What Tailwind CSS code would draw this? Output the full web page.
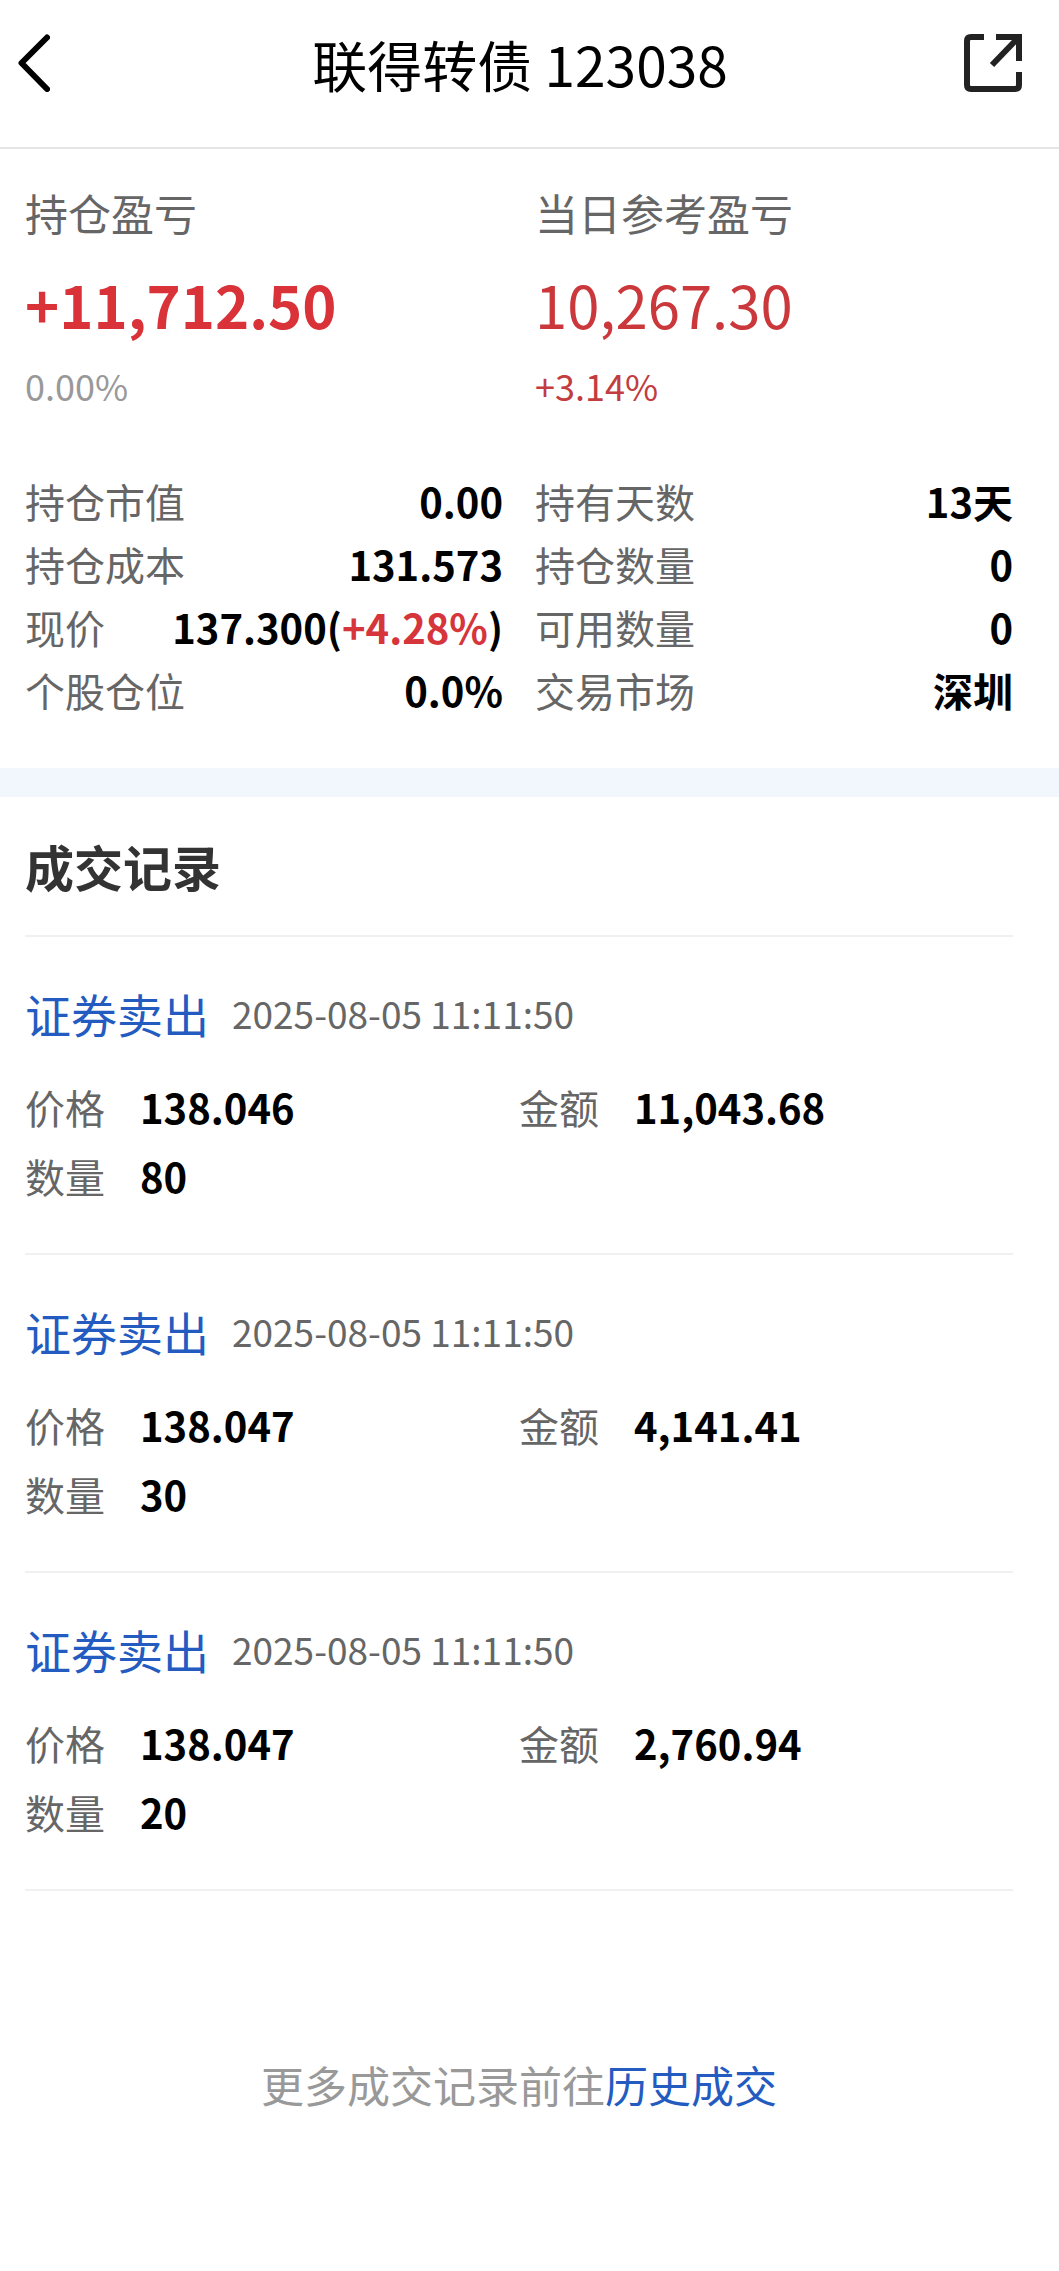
<!DOCTYPE html>
<html lang="zh-CN">
<head>
  <meta charset="UTF-8" />
  <meta name="viewport" content="width=device-width, initial-scale=1.0" />
  <title>联得转债 123038</title>
  <script src="https://cdn.jsdelivr.net/npm/@tailwindcss/browser@4"></script>
</head>
<body class="min-h-screen bg-white text-black font-['Noto_Sans_CJK_SC',sans-serif]">
  <header class="grid grid-cols-[1fr_auto_1fr] items-center h-[149px] pl-[18px] pr-[37px] pb-[22px] border-b-2 border-[#e5e5e5]">
    <button type="button" aria-label="返回" class="justify-self-start">
      <svg class="block w-[32px] h-[58px]" viewBox="0 0 32 58" fill="none" stroke="#000" stroke-width="6" stroke-linecap="round" stroke-linejoin="round">
        <path d="M29 3.5 L3.5 29 L29 55" />
      </svg>
    </button>
    <h1 class="text-[55px] leading-[80px]">联得转债 123038</h1>
    <button type="button" aria-label="分享" class="justify-self-end">
      <svg class="block size-[58px]" viewBox="0 0 58 58" fill="none" stroke="#222" stroke-width="6">
        <path d="M20 3 H7 Q3 3 3 7 V51 Q3 55 7 55 H51 Q55 55 55 51 V38" />
        <path d="M32 3 H55 V27" />
        <path d="M54 4 L28 31" />
      </svg>
    </button>
  </header>

  <main>
    <!-- Position summary -->
    <section class="pl-[25px] pr-[46px] pt-[31px] pb-[46px]">
      <div class="grid grid-cols-2 gap-x-8">
        <div>
          <h2 class="text-[43px] leading-[64px] text-[#666]">持仓盈亏</h2>
          <p class="mt-[20px] text-[58px] leading-[80px] font-bold text-[#d93238]">+11,712.50</p>
          <p class="mt-[17px] text-[36px] leading-[48px] text-[#999]">0.00%</p>
        </div>
        <div>
          <h2 class="text-[43px] leading-[64px] text-[#666]">当日参考盈亏</h2>
          <p class="mt-[20px] text-[58px] leading-[80px] text-[#cb383c]">10,267.30</p>
          <p class="mt-[17px] text-[36px] leading-[48px] text-[#c23c40]">+3.14%</p>
        </div>
      </div>

      <div class="grid grid-cols-2 gap-x-8 mt-[61px] text-[40px] leading-[63px]">
        <dl>
          <div class="flex justify-between">
            <dt class="text-[#666]">持仓市值</dt>
            <dd class="font-bold">0.00</dd>
          </div>
          <div class="flex justify-between">
            <dt class="text-[#666]">持仓成本</dt>
            <dd class="font-bold">131.573</dd>
          </div>
          <div class="flex justify-between">
            <dt class="text-[#666]">现价</dt>
            <dd class="font-bold">137.300(<span class="text-[#d5353b]">+4.28%</span>)</dd>
          </div>
          <div class="flex justify-between">
            <dt class="text-[#666]">个股仓位</dt>
            <dd class="font-bold">0.0%</dd>
          </div>
        </dl>
        <dl>
          <div class="flex justify-between">
            <dt class="text-[#666]">持有天数</dt>
            <dd class="font-bold">13天</dd>
          </div>
          <div class="flex justify-between">
            <dt class="text-[#666]">持仓数量</dt>
            <dd class="font-bold">0</dd>
          </div>
          <div class="flex justify-between">
            <dt class="text-[#666]">可用数量</dt>
            <dd class="font-bold">0</dd>
          </div>
          <div class="flex justify-between">
            <dt class="text-[#666]">交易市场</dt>
            <dd class="font-bold">深圳</dd>
          </div>
        </dl>
      </div>
    </section>

    <div class="h-[29px] bg-[#f2f6fd]"></div>

    <!-- Trade records -->
    <section class="pl-[25px] pr-[46px]">
      <h2 class="py-[33px] text-[49px] leading-[72px] font-bold text-[#333] border-b-2 border-[#f0f0f0]">成交记录</h2>

      <article class="pt-[44px] pb-[42px] border-b-2 border-[#f0f0f0]">
        <div class="flex items-center gap-[23px] leading-[64px]">
          <h3 class="text-[46px] text-[#245bc1]">证券卖出</h3>
          <time class="text-[37px] text-[#666]">2025-08-05 11:11:50</time>
        </div>
        <dl class="grid grid-cols-2 mt-[28px] text-[40px] leading-[69px]">
          <div class="flex gap-[35px]">
            <dt class="text-[#666]">价格</dt>
            <dd class="font-bold">138.046</dd>
          </div>
          <div class="flex gap-[35px]">
            <dt class="text-[#666]">金额</dt>
            <dd class="font-bold">11,043.68</dd>
          </div>
          <div class="flex gap-[35px]">
            <dt class="text-[#666]">数量</dt>
            <dd class="font-bold">80</dd>
          </div>
        </dl>
      </article>

      <article class="pt-[44px] pb-[42px] border-b-2 border-[#f0f0f0]">
        <div class="flex items-center gap-[23px] leading-[64px]">
          <h3 class="text-[46px] text-[#245bc1]">证券卖出</h3>
          <time class="text-[37px] text-[#666]">2025-08-05 11:11:50</time>
        </div>
        <dl class="grid grid-cols-2 mt-[28px] text-[40px] leading-[69px]">
          <div class="flex gap-[35px]">
            <dt class="text-[#666]">价格</dt>
            <dd class="font-bold">138.047</dd>
          </div>
          <div class="flex gap-[35px]">
            <dt class="text-[#666]">金额</dt>
            <dd class="font-bold">4,141.41</dd>
          </div>
          <div class="flex gap-[35px]">
            <dt class="text-[#666]">数量</dt>
            <dd class="font-bold">30</dd>
          </div>
        </dl>
      </article>

      <article class="pt-[44px] pb-[42px] border-b-2 border-[#f0f0f0]">
        <div class="flex items-center gap-[23px] leading-[64px]">
          <h3 class="text-[46px] text-[#245bc1]">证券卖出</h3>
          <time class="text-[37px] text-[#666]">2025-08-05 11:11:50</time>
        </div>
        <dl class="grid grid-cols-2 mt-[28px] text-[40px] leading-[69px]">
          <div class="flex gap-[35px]">
            <dt class="text-[#666]">价格</dt>
            <dd class="font-bold">138.047</dd>
          </div>
          <div class="flex gap-[35px]">
            <dt class="text-[#666]">金额</dt>
            <dd class="font-bold">2,760.94</dd>
          </div>
          <div class="flex gap-[35px]">
            <dt class="text-[#666]">数量</dt>
            <dd class="font-bold">20</dd>
          </div>
        </dl>
      </article>

      <p class="pt-[161px] pb-[120px] text-center text-[43px] leading-[64px] text-[#999]">更多成交记录前往<a href="#history" class="text-[#245bc1]">历史成交</a></p>
    </section>
  </main>
</body>
</html>
